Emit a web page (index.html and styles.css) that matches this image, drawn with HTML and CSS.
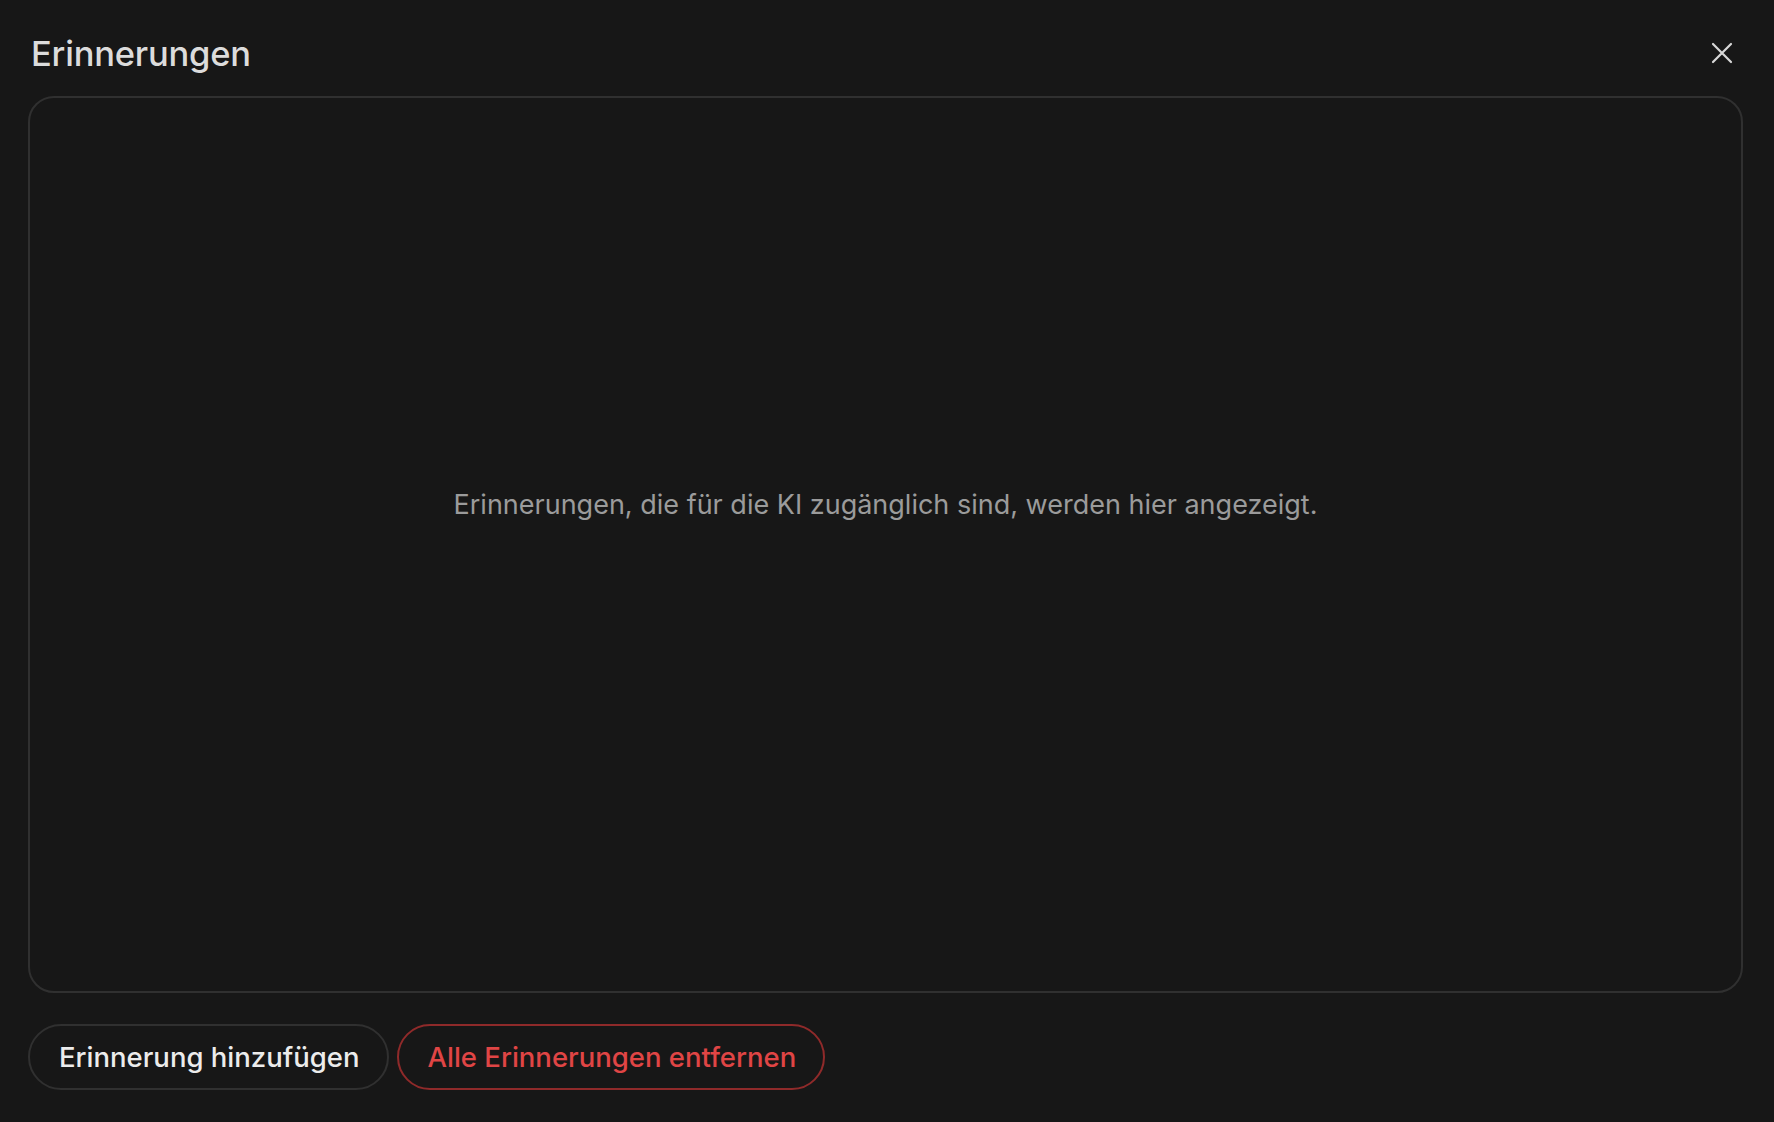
FILE: index.html
```html
<!DOCTYPE html>
<html lang="de">
<head>
<meta charset="utf-8">
<title>Erinnerungen</title>
<link rel="stylesheet" href="styles.css">
</head>
<body>
<div class="modal">
  <header class="modal-header">
    <h1 class="modal-title">Erinnerungen</h1>
    <button class="close-btn" aria-label="Schließen">
      <svg width="22" height="22" viewBox="0 0 22 22" fill="none" stroke="currentColor" stroke-width="2.2" stroke-linecap="round"><path d="M2 2L20 20M20 2L2 20"/></svg>
    </button>
  </header>
  <section class="memory-box">
    <p class="empty-text">Erinnerungen, die für die KI zugänglich sind, werden hier angezeigt.</p>
  </section>
  <footer class="modal-actions">
    <button class="pill-btn">Erinnerung hinzufügen</button>
    <button class="pill-btn danger">Alle Erinnerungen entfernen</button>
  </footer>
</div>
</body>
</html>
```
FILE: styles.css
```css
* { box-sizing: border-box; }
html, body {
  margin: 0;
  padding: 0;
  height: 100%;
  background: #171717;
}
body {
  font-family: Inter, "Noto Sans", "Liberation Sans", sans-serif;
  color: #e3e3e3;
}
.modal {
  height: 100vh;
  display: flex;
  flex-direction: column;
  padding: 0 31px 32px 28px;
}
.modal-header {
  height: 96px;
  flex: none;
  display: flex;
  align-items: center;
  justify-content: space-between;
  padding-top: 10px;
}
.modal-title {
  margin: 0 0 0 3px;
  font-size: 34.5px;
  font-weight: 500;
  color: #dcdcdc;
  letter-spacing: -0.2px;
}
.close-btn {
  width: 32px;
  height: 32px;
  margin-right: 5px;
  border: none;
  background: transparent;
  color: #d8d8d8;
  display: flex;
  align-items: center;
  justify-content: center;
  padding: 0;
}
.memory-box {
  flex: 1;
  border: 2px solid #303030;
  border-radius: 26px;
  display: flex;
  align-items: center;
  justify-content: center;
}
.empty-text {
  margin: 0;
  font-size: 27px;
  color: #9b9b9b;
  padding-bottom: 80px;
}
.modal-actions {
  flex: none;
  display: flex;
  gap: 8px;
  margin-top: 31px;
}
.pill-btn {
  height: 66px;
  padding: 0 28px 0 29px;
  border-radius: 33px;
  border: 2px solid #303030;
  background: transparent;
  font-family: Inter, "Noto Sans", "Liberation Sans", sans-serif;
  font-size: 27.5px;
  font-weight: 500;
  color: #ececec;
}
.pill-btn.danger {
  padding: 0 27px 0 28px;
  color: #e04545;
  border-color: #8f2a2a;
}
```
